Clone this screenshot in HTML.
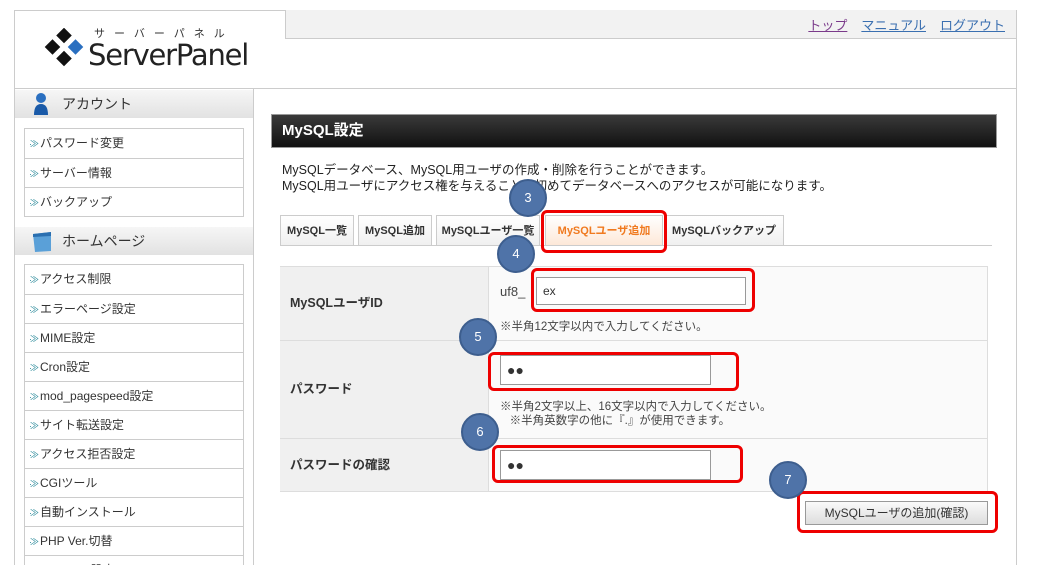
<!DOCTYPE html>
<html><head><meta charset="utf-8"><style>
*{margin:0;padding:0;box-sizing:border-box}
html,body{width:1047px;height:565px;overflow:hidden}
body{background:#fff;font-family:"Liberation Sans","Noto Sans CJK JP",sans-serif;color:#333;position:relative}
.a{position:absolute}
.frame{left:14px;top:10px;width:1003px;height:570px;border:1px solid #ccc}
.topbar{left:285px;top:10px;width:731px;height:29px;background:#f2f2f2;border-bottom:1px solid #ccc;border-left:1px solid #ccc}
.links{right:42px;top:15px;font-size:13px}
.links span{margin-left:14px;text-decoration:underline;color:#3a6fb0}
.hline{left:14px;top:88px;width:1003px;height:1px;background:#ccc}
.side{left:253px;top:88px;width:1px;height:480px;background:#ccc}
.sh{left:15px;width:238px;height:28px;background:linear-gradient(#f6f6f6,#e2e2e2);font-size:14px;color:#333;padding-left:47px;line-height:28px}
.menu{left:24px;width:220px;border:1px solid #ccc;background:#fff}
.menu div{height:29px;border-top:1px solid #ccc;font-size:12px;line-height:28px;padding-left:4px;color:#333}
.menu div:first-child{border-top:none}
.menu div:before{content:"·≫";color:#2a8a9a;font-size:9px;letter-spacing:-2px;margin-right:3px}
.title{left:271px;top:114px;width:726px;height:34px;background:linear-gradient(#3a3a3a,#111);border:1px solid #999;color:#fff;font-weight:bold;font-size:15px;line-height:32px;padding-left:10px}
.desc{left:282px;top:162px;font-size:12.5px;line-height:16px;color:#222}
.tabline{left:280px;top:245px;width:712px;height:1px;background:#ccc}
.tab{top:215px;height:30px;border:1px solid #ccc;border-bottom:none;background:linear-gradient(#fff,#f0f0f0);font-size:11px;font-weight:bold;line-height:30px;text-align:center;color:#333}
.tbl{left:280px;top:266px;width:708px;height:226px;border:1px solid #ddd;background:#fafafa}
.lab{left:280px;width:209px;background:#f0f0f0;border-right:1px solid #ddd;font-size:12.5px;font-weight:bold;padding-left:10px;color:#333}
.row{left:280px;width:708px;height:1px;background:#ddd}
.inp{background:#fff;border:1px solid #999;font-size:12px;padding-left:6px}
.red{border:3px solid #e00;border-radius:6px}
.c{width:38px;height:38px;border-radius:50%;background:#4f73a8;border:2px solid #3d5e8e;color:#fff;font-size:13px;text-align:center;line-height:34px}
.note{font-size:11.5px;color:#444}
</style></head><body>
<div class="a frame"></div>
<div class="a topbar"></div>
<div class="a links"><span style="color:#7a3a8a">トップ</span><span>マニュアル</span><span>ログアウト</span></div>
<svg class="a" style="left:44px;top:28px" width="44" height="40" viewBox="0 0 44 40"><rect x="14.5" y="2" width="11" height="11" transform="rotate(45 20 7.5)" fill="#111"/><rect x="3" y="13.5" width="11" height="11" transform="rotate(45 8.5 19)" fill="#111"/><rect x="26" y="13.5" width="11" height="11" transform="rotate(45 31.5 19)" fill="#2a6fc0"/><rect x="14.5" y="25" width="11" height="11" transform="rotate(45 20 30.5)" fill="#111"/></svg>
<div class="a" style="left:94px;top:25px;font-size:11px;letter-spacing:9px;color:#333">サーバーパネル</div>
<div class="a" style="left:88px;top:38px;font-size:29px;font-family:'DejaVu Sans',sans-serif;color:#222;letter-spacing:-1.2px">ServerPanel</div>
<div class="a hline"></div>
<div class="a side"></div>
<div class="a sh" style="top:90px">アカウント</div>
<svg class="a" style="left:33px;top:92px" width="16" height="24"><circle cx="8" cy="6" r="5" fill="#2a6fc0"/><path d="M1 23 Q1 12 8 12 Q15 12 15 23Z" fill="#1a5aa8"/></svg>
<div class="a menu" style="top:128px"><div>パスワード変更</div><div>サーバー情報</div><div>バックアップ</div></div>
<div class="a sh" style="top:227px">ホームページ</div>
<svg class="a" style="left:31px;top:231px" width="22" height="22"><path d="M2 3 L20 1 L20 20 L4 21Z" fill="#5aa0d8"/><path d="M2 3 L20 1 L20 5 L2 6Z" fill="#2a6fb0"/></svg>
<div class="a menu" style="top:264px"><div>アクセス制限</div><div>エラーページ設定</div><div>MIME設定</div><div>Cron設定</div><div>mod_pagespeed設定</div><div>サイト転送設定</div><div>アクセス拒否設定</div><div>CGIツール</div><div>自動インストール</div><div>PHP Ver.切替</div><div>.htaccess設定</div></div>
<div class="a title">MySQL設定</div>
<div class="a desc">MySQLデータベース、MySQL用ユーザの作成・削除を行うことができます。<br>MySQL用ユーザにアクセス権を与えることで初めてデータベースへのアクセスが可能になります。</div>
<div class="a tabline"></div>
<div class="a tab" style="left:280px;width:74px">MySQL一覧</div>
<div class="a tab" style="left:358px;width:74px">MySQL追加</div>
<div class="a tab" style="left:436px;width:104px">MySQLユーザ一覧</div>
<div class="a tab" style="left:545px;width:118px;color:#f07a20;background:linear-gradient(#fff,#fde8d8)">MySQLユーザ追加</div>
<div class="a tab" style="left:664px;width:120px">MySQLバックアップ</div>
<div class="a tbl"></div>
<div class="a lab" style="top:267px;height:73px;line-height:73px">MySQLユーザID</div>
<div class="a lab" style="top:341px;height:97px;line-height:97px">パスワード</div>
<div class="a lab" style="top:439px;height:52px;line-height:52px">パスワードの確認</div>
<div class="a row" style="top:340px"></div>
<div class="a row" style="top:438px"></div>
<div class="a" style="left:500px;top:284px;font-size:13px;color:#444">uf8_</div>
<div class="a inp" style="left:536px;top:277px;width:210px;height:28px;line-height:26px">ex</div>
<div class="a note" style="left:500px;top:318px">※半角12文字以内で入力してください。</div>
<div class="a inp" style="left:500px;top:355px;width:211px;height:30px;line-height:28px;font-size:14px">●●</div>
<div class="a note" style="left:500px;top:400px;line-height:14px">※半角2文字以上、16文字以内で入力してください。<br>&nbsp;&nbsp;&nbsp;※半角英数字の他に『.』が使用できます。</div>
<div class="a inp" style="left:500px;top:450px;width:211px;height:30px;line-height:28px;font-size:14px">●●</div>
<div class="a" style="left:805px;top:501px;width:183px;height:24px;border:1px solid #999;background:linear-gradient(#fafafa,#ddd);font-size:12px;text-align:center;line-height:22px;color:#333">MySQLユーザの追加(確認)</div>
<div class="a red" style="left:541px;top:210px;width:126px;height:43px"></div>
<div class="a red" style="left:531px;top:268px;width:224px;height:44px"></div>
<div class="a red" style="left:488px;top:352px;width:251px;height:39px"></div>
<div class="a red" style="left:492px;top:445px;width:251px;height:38px"></div>
<div class="a red" style="left:797px;top:491px;width:201px;height:42px"></div>
<div class="a c" style="left:509px;top:179px">3</div>
<div class="a c" style="left:497px;top:235px">4</div>
<div class="a c" style="left:459px;top:318px">5</div>
<div class="a c" style="left:461px;top:413px">6</div>
<div class="a c" style="left:769px;top:461px">7</div>
</body></html>
